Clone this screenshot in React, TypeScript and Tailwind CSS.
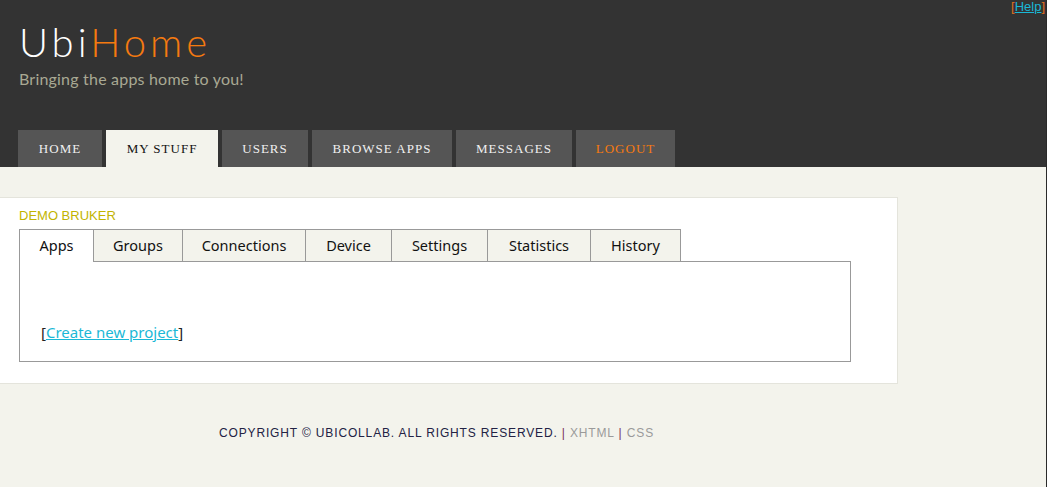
import React from "react";

const navItems = [
  { label: "HOME", w: "w-[84px]" },
  { label: "MY STUFF", w: "w-[112px]", active: true },
  { label: "USERS", w: "w-[86px]" },
  { label: "BROWSE APPS", w: "w-[140px]" },
  { label: "MESSAGES", w: "w-[116px]" },
  { label: "LOGOUT", w: "w-[99px]", logout: true },
];

const tabs = [
  { label: "Apps", w: "w-[75px]", active: true },
  { label: "Groups", w: "w-[89px]" },
  { label: "Connections", w: "w-[123px]" },
  { label: "Device", w: "w-[86px]" },
  { label: "Settings", w: "w-[96px]" },
  { label: "Statistics", w: "w-[103px]" },
  { label: "History", w: "w-[90px]" },
];

export default function App() {
  return (
    <div className="w-[1047px] h-[487px] bg-[#f3f3ec] overflow-hidden border-r border-[#2a2a2a]">
      <header className="relative bg-[#333333] h-[167px] flex flex-col">
        <div className="absolute top-0 right-[1px] text-[13px] font-['Liberation_Sans',sans-serif] leading-[14px]">
          <span className="text-[#e07020]">[</span>
          <a href="#" className="text-[#1ab8d6] underline">Help</a>
          <span className="text-[#e07020]">]</span>
        </div>
        <div className="pl-[19px] pt-[20px]">
          <div className="font-['Lato',sans-serif] font-light text-[40px] leading-[44px] tracking-[4px]">
            <span className="text-white">Ubi</span>
            <span className="text-[#f57a10]">Home</span>
          </div>
          <div className="mt-[5px] font-['Lato',sans-serif] text-[16px] leading-[20px] text-[#a9a994] tracking-[0.2px]">
            Bringing the apps home to you!
          </div>
        </div>
        <nav className="mt-auto flex gap-[4px] pl-[18px]">
          {navItems.map((n) => (
            <div
              key={n.label}
              className={`${n.w} h-[37px] flex items-center justify-center font-['Liberation_Serif',serif] text-[13px] tracking-[1px] ${
                n.active
                  ? "bg-[#f3f3ec] text-[#111111]"
                  : n.logout
                  ? "bg-[#555555] text-[#f57a10]"
                  : "bg-[#555555] text-[#f0f0f0]"
              }`}
            >
              {n.label}
            </div>
          ))}
        </nav>
      </header>

      <main className="pt-[30px]">
        <section className="w-[898px] h-[187px] bg-white border border-l-0 border-[#e4e4dc] pl-[19px] pt-[10px]">
          <div className="font-['Liberation_Sans',sans-serif] text-[13px] leading-[16px] text-[#c2b400]">
            DEMO BRUKER
          </div>
          <div className="mt-[5px] flex font-['Noto_Sans',sans-serif] text-[14.5px] text-[#111111]">
            {tabs.map((t, i) => (
              <div
                key={t.label}
                className={`${t.w} h-[33px] flex items-center justify-center border-t border-r border-[#999999] ${
                  i === 0 ? "border-l" : ""
                } ${t.active ? "bg-white -mb-px" : "bg-[#f3f3ec] border-b"} relative z-10`}
              >
                {t.label}
              </div>
            ))}
          </div>
          <div className="w-[832px] h-[101px] border border-[#999999] border-t-0 -mt-px pt-[59px] pl-[21px] relative">
            <div className="absolute top-0 left-[74px] right-0 border-t border-[#999999]" />
            <span className="font-['Noto_Sans',sans-serif] text-[15px] leading-[18px] text-[#222222]">
              [<a href="#" className="text-[#1ab8d6] underline">Create new project</a>]
            </span>
          </div>
        </section>
        <footer className="pt-[40px] pl-[219px] font-['Liberation_Sans',sans-serif] text-[12px] tracking-[0.85px] text-[#222244]">
          COPYRIGHT © UBICOLLAB. ALL RIGHTS RESERVED. <span className="text-[#7a3060]">|</span>{" "}
          <span className="text-[#9a9a9a]">XHTML</span> <span className="text-[#7a3060]">|</span>{" "}
          <span className="text-[#9a9a9a]">CSS</span>
        </footer>
      </main>
    </div>
  );
}
